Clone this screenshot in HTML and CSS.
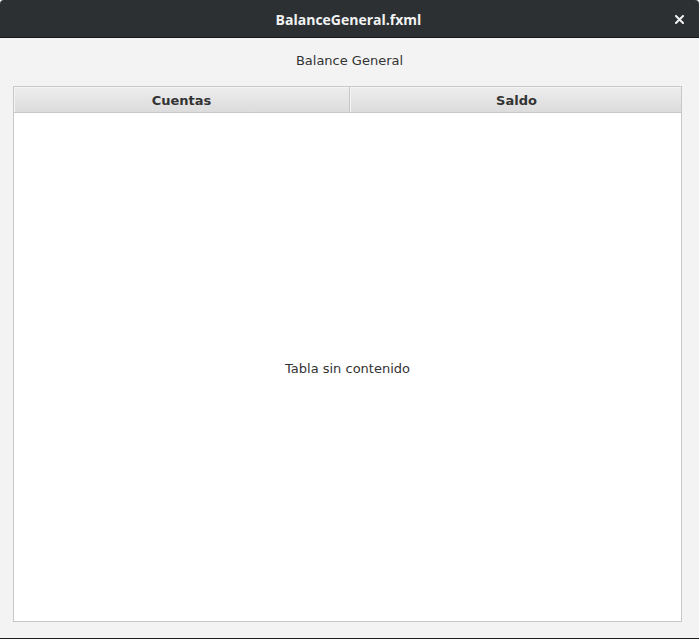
FILE: index.html
```html
<!DOCTYPE html>
<html>
<head>
<meta charset="utf-8">
<link rel="stylesheet" href="styles.css">
</head>
<body>
<div class="window">
  <header class="titlebar">
    <span class="title">BalanceGeneral.fxml</span>
    <span class="close">
      <svg width="9" height="9" viewBox="0 0 9 9"><path d="M1 1 L8 8 M8 1 L1 8" stroke="#f0f0f0" stroke-width="2" stroke-linecap="square"/></svg>
    </span>
  </header>
  <main class="content">
    <div class="heading">Balance General</div>
    <div class="table">
      <div class="thead">
        <div class="th">Cuentas</div>
        <div class="th">Saldo</div>
      </div>
      <div class="tbody">
        <span class="placeholder">Tabla sin contenido</span>
      </div>
    </div>
  </main>
</div>
</body>
</html>
```
FILE: styles.css
```css
html, body {
  margin: 0;
  padding: 0;
  width: 699px;
  height: 639px;
  overflow: hidden;
  background: #f3f3f3;
}
.window {
  display: flex;
  flex-direction: column;
  width: 699px;
  height: 639px;
  border-bottom: 1px solid #1e1e1e;
  box-sizing: border-box;
}
.titlebar {
  position: relative;
  height: 38px;
  flex: none;
  background: #2c3033;
  border-bottom: 1px solid #141617;
  border-radius: 4px 4px 0 0;
  box-sizing: border-box;
  display: flex;
  align-items: center;
  justify-content: center;
}
.title {
  font-family: "Open Sans", "DejaVu Sans", sans-serif;
  font-weight: 700;
  font-size: 14px;
  color: #f2f2f2;
  margin-top: 1px;
  margin-left: -2px;
}
.close {
  position: absolute;
  right: 15px;
  top: 15px;
  width: 9px;
  height: 9px;
  display: flex;
}
.content {
  flex: 1;
  display: flex;
  flex-direction: column;
  padding: 0 17px 16px 13px;
  background: #f3f3f3;
}
.heading {
  height: 48px;
  display: flex;
  align-items: center;
  justify-content: center;
  font-family: "DejaVu Sans", sans-serif;
  font-size: 13px;
  color: #333333;
  padding-bottom: 3px;
  box-sizing: border-box;
  margin-left: 4px;
}
.table {
  flex: 1;
  display: flex;
  flex-direction: column;
  border: 1px solid #c8c8c8;
  background: #ffffff;
}
.thead {
  display: grid;
  grid-template-columns: 336px 1fr;
  height: 25px;
  flex: none;
  border-bottom: 1px solid #c8c8c8;
  background: linear-gradient(#ededed, #dcdcdc);
}
.th {
  display: flex;
  align-items: center;
  justify-content: center;
  font-family: "DejaVu Sans", sans-serif;
  font-weight: 700;
  font-size: 13px;
  color: #333333;
  border-right: 1px solid #c8c8c8;
  box-shadow: inset 1px 1px 0 #f4f4f4;
  padding-top: 1px;
  box-sizing: border-box;
}
.th:last-child {
  border-right: none;
  padding-left: 2px;
}
.tbody {
  flex: 1;
  display: flex;
  align-items: center;
  justify-content: center;
}
.placeholder {
  font-family: "DejaVu Sans", sans-serif;
  font-size: 13px;
  color: #333333;
  margin-top: 3px;
}
```
